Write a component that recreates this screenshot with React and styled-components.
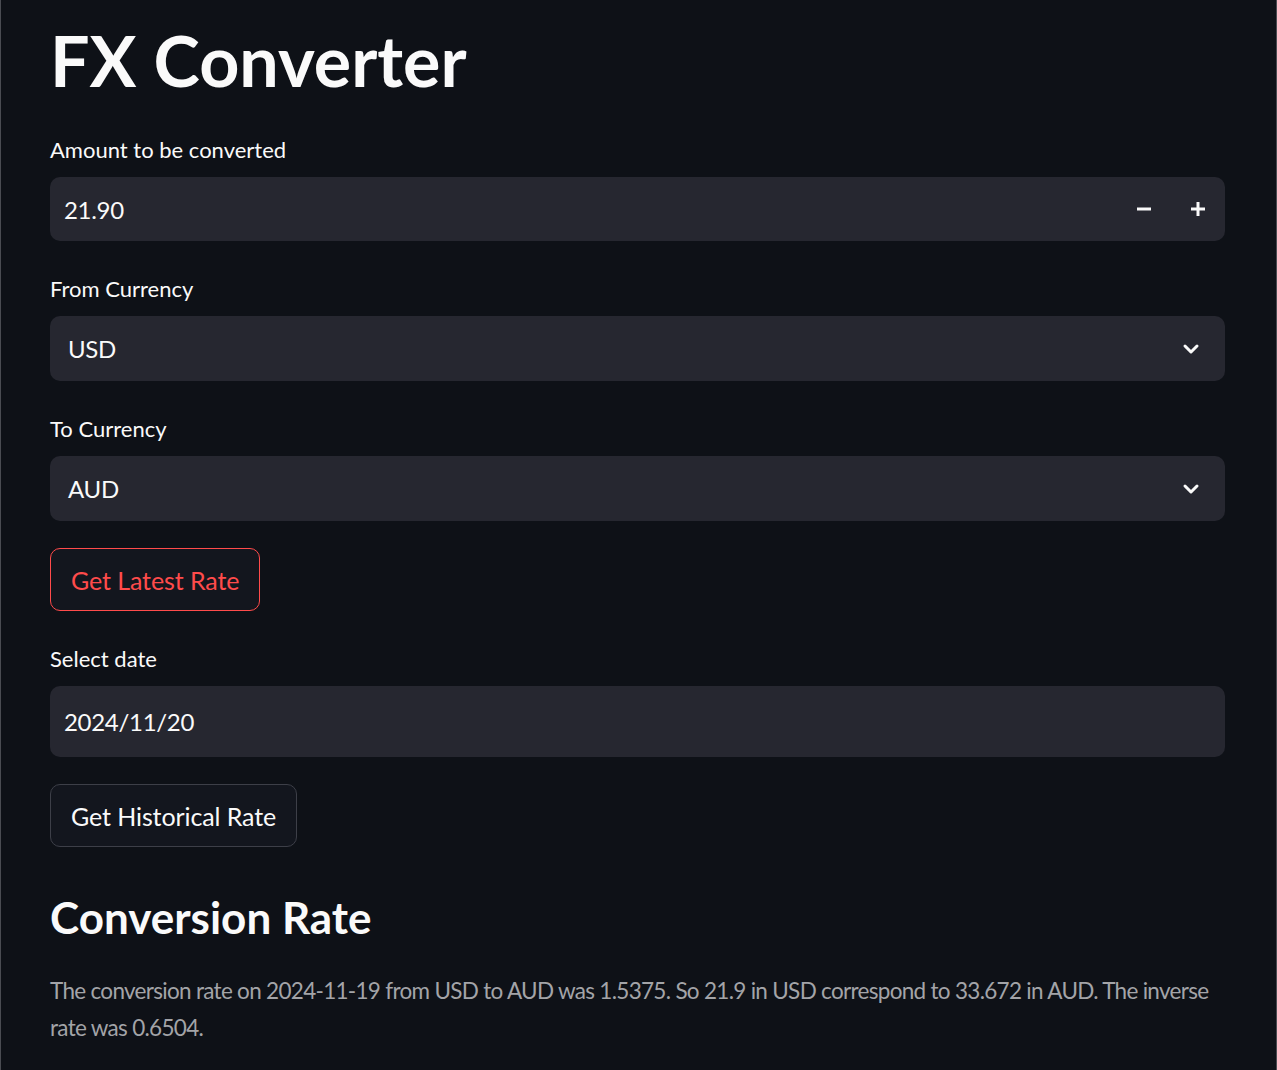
import styled, { createGlobalStyle } from "styled-components";

const GlobalStyle = createGlobalStyle`
    html, body {
        margin: 0;
        padding: 0;
        background: #0e1117;
    }
    * {
        box-sizing: border-box;
    }
`;

const Chevron = () => (
    <svg width="18" height="12" viewBox="0 0 18 12" fill="none">
        <path d="M3 3l6 6 6-6" stroke="#fafafa" strokeWidth="3" strokeLinecap="round" strokeLinejoin="round" />
    </svg>
);

const Minus = () => (
    <svg width="16" height="16" viewBox="0 0 16 16">
        <rect x="1" y="6.5" width="14" height="3" fill="#fafafa" />
    </svg>
);

const Plus = () => (
    <svg width="16" height="16" viewBox="0 0 16 16">
        <rect x="1" y="6.5" width="14" height="3" fill="#fafafa" />
        <rect x="6.5" y="1" width="3" height="14" fill="#fafafa" />
    </svg>
);

export default function App() {
    return (
        <Page>
            <GlobalStyle />
            <Title>FX Converter</Title>

            <Widget>
                <Label>Amount to be converted</Label>
                <Field $height={64}>
                    <Value>21.90</Value>
                    <Steppers>
                        <StepButton><Minus /></StepButton>
                        <StepButton><Plus /></StepButton>
                    </Steppers>
                </Field>
            </Widget>

            <Widget>
                <Label>From Currency</Label>
                <Field $height={65} $select>
                    <Value>USD</Value>
                    <Chevron />
                </Field>
            </Widget>

            <Widget>
                <Label>To Currency</Label>
                <Field $height={65} $select>
                    <Value>AUD</Value>
                    <Chevron />
                </Field>
            </Widget>

            <Button $primary>Get Latest Rate</Button>

            <Widget>
                <Label>Select date</Label>
                <Field $height={71}>
                    <Value>2024/11/20</Value>
                </Field>
            </Widget>

            <Button>Get Historical Rate</Button>

            <Subtitle>Conversion Rate</Subtitle>
            <Paragraph>
                The conversion rate on 2024-11-19 from USD to AUD was 1.5375. So 21.9 in USD correspond to 33.672 in AUD. The inverse rate was 0.6504.
            </Paragraph>
        </Page>
    );
}

const Page = styled.div`
    min-height: 1070px;
    width: 1277px;
    padding: 0 51px 0 49px;
    background: #0e1117;
    border-left: 1px solid #4a4c52;
    border-right: 1px solid #4a4c52;
    font-family: Lato, "Open Sans", sans-serif;
    color: #fafafa;
    display: flex;
    flex-direction: column;
    align-items: flex-start;
`;

const Title = styled.h1`
    margin: 0;
    padding-top: 18px;
    height: 137px;
    font-size: 70px;
    line-height: 84px;
    font-weight: 700;
`;

const Widget = styled.div`
    width: 100%;
    display: flex;
    flex-direction: column;
    margin-bottom: 35px;
`;

const Label = styled.label`
    display: block;
    height: 40px;
    font-size: 22px;
    line-height: 26px;
`;

const Field = styled.div`
    width: 100%;
    height: ${p => p.$height}px;
    background: #262730;
    border-radius: 10px;
    display: flex;
    align-items: center;
    justify-content: space-between;
    padding: 0 ${p => (p.$select ? "25px" : "19px")} 0 ${p => (p.$select ? "18px" : "14px")};
`;

const Value = styled.span`
    font-size: 24px;
    letter-spacing: -0.3px;
    color: #fafafa;
`;

const Steppers = styled.div`
    display: flex;
    align-items: center;
    gap: 38px;
`;

const StepButton = styled.div`
    width: 16px;
    height: 16px;
    display: flex;
`;

const Button = styled.button`
    height: 63px;
    margin: -8px 0 35px;
    padding: 0 20px;
    border-radius: 10px;
    background: #13161e;
    border: 1px solid ${p => (p.$primary ? "#ff4b4b" : "#3d3f48")};
    color: ${p => (p.$primary ? "#ff4b4b" : "#fafafa")};
    font-family: Lato, "Open Sans", sans-serif;
    font-size: 25px;
    letter-spacing: -0.1px;
`;

const Subtitle = styled.h2`
    margin: 9px 0 0;
    font-size: 44px;
    line-height: 52px;
    font-weight: 700;
`;

const Paragraph = styled.p`
    margin: 29px 0 0;
    width: 100%;
    font-size: 22.5px;
    letter-spacing: -0.7px;
    line-height: 37px;
    color: #a3a4a8;
`;
